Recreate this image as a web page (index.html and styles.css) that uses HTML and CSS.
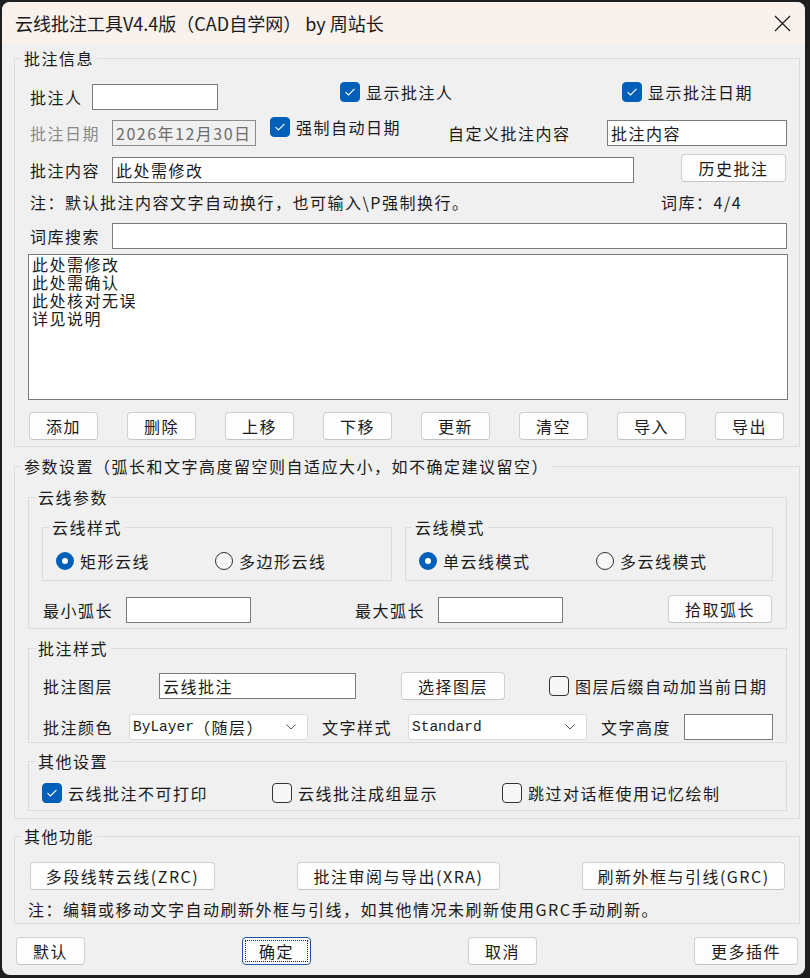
FILE: index.html
```html
<!DOCTYPE html>
<html lang="zh-CN">

<head>
    <meta charset="UTF-8">
    <meta name="viewport" content="width=device-width, initial-scale=1.0">
    <title>云线批注工具</title>
    <link rel="stylesheet" href="styles.css">
</head>

<body>
    <div class="window">
        <div class="titleBar">
            <span class="title">云线批注工具V4.4版（CAD自学网） by 周站长</span>
            <svg class="closeIcon" width="17" height="17" viewBox="0 0 17 17">
                <path d="M1 1L16 16M16 1L1 16" stroke="#1a1a1a" stroke-width="1.2" fill="none" />
            </svg>
        </div>

        <div class="content">
            <!-- 批注信息 -->
            <fieldset class="group" id="infoGroup">
                <legend>批注信息</legend>
                <div class="row" id="rowAuthor">
                    <span class="label" id="lblAuthor">批注人</span>
                    <div class="input" id="authorInput"></div>
                    <label class="check raised" id="chkShowAuthor">
                        <span class="box on"><svg width="12" height="10" viewBox="0 0 12 10"><path d="M1.5 5.2L4.5 8L10.5 1.8" stroke="#fff" stroke-width="1.1" fill="none" /></svg></span>显示批注人
                    </label>
                    <label class="check raised">
                        <span class="box on"><svg width="12" height="10" viewBox="0 0 12 10"><path d="M1.5 5.2L4.5 8L10.5 1.8" stroke="#fff" stroke-width="1.1" fill="none" /></svg></span>显示批注日期
                    </label>
                </div>
                <div class="row" id="rowDate">
                    <span class="label lbl82 disabled">批注日期</span>
                    <div class="input disabled" id="dateInput">2026年12月30日</div>
                    <label class="check raised" id="chkForceDate">
                        <span class="box on"><svg width="12" height="10" viewBox="0 0 12 10"><path d="M1.5 5.2L4.5 8L10.5 1.8" stroke="#fff" stroke-width="1.1" fill="none" /></svg></span>强制自动日期
                    </label>
                    <span class="label" id="lblCustom">自定义批注内容</span>
                    <div class="input" id="customInput">批注内容</div>
                </div>
                <div class="row" id="rowContent">
                    <span class="label lbl82">批注内容</span>
                    <div class="input" id="contentInput">此处需修改</div>
                    <button class="btn" id="historyBtn">历史批注</button>
                </div>
                <div class="row noteRow" id="rowNote">
                    <span id="noteText">注：默认批注内容文字自动换行，也可输入\P强制换行。</span>
                    <span>词库：4/4</span>
                </div>
                <div class="row" id="rowSearch">
                    <span class="label lbl82">词库搜索</span>
                    <div class="input grow"></div>
                </div>
                <div class="list">
                    <div>此处需修改</div>
                    <div>此处需确认</div>
                    <div>此处核对无误</div>
                    <div>详见说明</div>
                </div>
                <div class="btnRow">
                    <button class="btn small">添加</button>
                    <button class="btn small">删除</button>
                    <button class="btn small">上移</button>
                    <button class="btn small">下移</button>
                    <button class="btn small">更新</button>
                    <button class="btn small">清空</button>
                    <button class="btn small">导入</button>
                    <button class="btn small">导出</button>
                </div>
            </fieldset>

            <!-- 参数设置 -->
            <fieldset class="group" id="paramGroup">
                <legend>参数设置（弧长和文字高度留空则自适应大小，如不确定建议留空）</legend>

                <fieldset class="sub" id="cloudParams">
                    <legend>云线参数</legend>
                    <div class="pair">
                        <fieldset class="mini" id="styleBox">
                            <legend>云线样式</legend>
                            <div class="radioRow">
                                <label class="radio" id="radioRect"><span class="dot on"></span>矩形云线</label>
                                <label class="radio"><span class="dot"></span>多边形云线</label>
                            </div>
                        </fieldset>
                        <fieldset class="mini" id="modeBox">
                            <legend>云线模式</legend>
                            <div class="radioRow">
                                <label class="radio" id="radioSingle"><span class="dot on"></span>单云线模式</label>
                                <label class="radio"><span class="dot"></span>多云线模式</label>
                            </div>
                        </fieldset>
                    </div>
                    <div class="row" id="rowArc">
                        <span class="label lbl83">最小弧长</span>
                        <div class="input arcInput"></div>
                        <span class="label lbl83" id="lblMaxArc">最大弧长</span>
                        <div class="input arcInput"></div>
                        <button class="btn" id="pickArcBtn">拾取弧长</button>
                    </div>
                </fieldset>

                <fieldset class="sub" id="noteStyle">
                    <legend>批注样式</legend>
                    <div class="row" id="rowLayer">
                        <span class="label" id="lblLayer">批注图层</span>
                        <div class="input" id="layerInput">云线批注</div>
                        <button class="btn" id="pickLayerBtn">选择图层</button>
                        <label class="check" id="chkLayerDate">
                            <span class="box"></span>图层后缀自动加当前日期
                        </label>
                    </div>
                    <div class="row" id="rowColor">
                        <span class="label lbl86">批注颜色</span>
                        <div class="select"><span class="mono">ByLayer</span>（随层）
                            <svg class="chevron" width="10" height="6" viewBox="0 0 10 6"><path d="M0.5 0.5L5 5L9.5 0.5" stroke="#555" stroke-width="1" fill="none" /></svg>
                        </div>
                        <span class="label lbl86 gapLeft">文字样式</span>
                        <div class="select"><span class="mono">Standard</span>
                            <svg class="chevron" width="10" height="6" viewBox="0 0 10 6"><path d="M0.5 0.5L5 5L9.5 0.5" stroke="#555" stroke-width="1" fill="none" /></svg>
                        </div>
                        <span class="label lbl83 gapLeft">文字高度</span>
                        <div class="input" id="heightInput"></div>
                    </div>
                </fieldset>

                <fieldset class="sub" id="otherSettings">
                    <legend>其他设置</legend>
                    <div class="row checkRow">
                        <label class="check w230">
                            <span class="box on"><svg width="12" height="10" viewBox="0 0 12 10"><path d="M1.5 5.2L4.5 8L10.5 1.8" stroke="#fff" stroke-width="1.1" fill="none" /></svg></span>云线批注不可打印
                        </label>
                        <label class="check w230"><span class="box"></span>云线批注成组显示</label>
                        <label class="check"><span class="box"></span>跳过对话框使用记忆绘制</label>
                    </div>
                </fieldset>
            </fieldset>

            <!-- 其他功能 -->
            <fieldset class="group" id="funcGroup">
                <legend>其他功能</legend>
                <div class="row funcRow">
                    <button class="btn" id="zrcBtn">多段线转云线(ZRC)</button>
                    <button class="btn wide">批注审阅与导出(XRA)</button>
                    <button class="btn wide">刷新外框与引线(GRC)</button>
                </div>
                <div class="row noteRow" id="rowRefresh">注：编辑或移动文字自动刷新外框与引线，如其他情况未刷新使用GRC手动刷新。</div>
            </fieldset>

            <div class="footer">
                <button class="btn small">默认</button>
                <button class="btn small focused">确定</button>
                <button class="btn small">取消</button>
                <button class="btn" id="moreBtn">更多插件</button>
            </div>
        </div>
    </div>
</body>

</html>
```

FILE: styles.css
```css
* {
    box-sizing: border-box;
}

body {
    margin: 0;
    background-color: #1f1f1f;
    font-family: "Noto Sans CJK SC", sans-serif;
    font-size: 16px;
    line-height: 20px;
    letter-spacing: 1.5px;
    color: #1a1a1a;
}

.window {
    width: 803px;
    height: 973px;
    margin: 2px 0 0 2px;
    background-color: #f0f0f0;
    border-radius: 8px;
    overflow: hidden;
}

.titleBar {
    height: 42px;
    display: flex;
    align-items: center;
    padding: 0 14px 0 13px;
    background-color: #f8f1ec;
}

.title {
    font-size: 18px;
    letter-spacing: 0;
}

.closeIcon {
    margin-left: auto;
}

.content {
    padding: 0 5px 0 12px;
}

fieldset {
    margin: 0;
    min-width: 0;
    border: 1px solid #dcdcdc;
}

legend {
    padding: 0 3px;
    margin-left: -7px;
    line-height: 20px;
}

/* groups */

.group {
    padding: 16px 11px 6px 13px;
}

#infoGroup {
    margin-top: 4px;
}

#paramGroup {
    margin-top: 9px;
    padding: 11px 11px 7px 13px;
}

#funcGroup {
    margin-top: 7px;
    padding: 16px 11px 4px 13px;
}

.sub {
    margin-right: 1px;
    padding: 10px 13px 4px 13px;
}

#noteStyle {
    margin-top: 9px;
    padding: 14px 13px 2px 13px;
}

#otherSettings {
    margin-top: 8px;
    padding: 12px 13px 7px 13px;
}

.pair {
    display: flex;
    gap: 13px;
}

.mini {
    padding: 14px 13px 9px 13px;
}

#styleBox {
    width: 350px;
}

#modeBox {
    flex: 1;
}

/* rows */

.row {
    display: flex;
    align-items: center;
    height: 26px;
}

.label {
    flex: none;
    margin-left: 2px;
}

.label.disabled {
    color: #8a8a8a;
}

#lblAuthor {
    width: 62px;
}

.lbl82 {
    width: 82px;
}

.lbl83 {
    width: 83px;
}

.lbl86 {
    width: 86px;
}

#rowDate {
    margin-top: 10px;
}

#rowContent {
    margin-top: 11px;
}

#rowNote {
    margin-top: 9px;
    height: 20px;
}

#rowSearch {
    margin-top: 11px;
}

.noteRow {
    padding-left: 2px;
}

#noteText {
    width: 631px;
}

.input {
    flex: none;
    height: 26px;
    display: flex;
    align-items: center;
    padding-left: 3px;
    background-color: #fff;
    border: 1px solid #7a7a7a;
    white-space: nowrap;
}

.input.disabled {
    background-color: #f0f0f0;
    border-color: #8c8c8c;
    color: #6d6d6d;
}

.input.grow {
    flex: 1;
    margin-right: 1px;
}

#authorInput {
    width: 126px;
}

#dateInput {
    width: 144px;
}

#customInput {
    width: 180px;
}

#contentInput {
    width: 522px;
}

#lblCustom {
    width: 159px;
    margin-left: 0;
}

.check {
    flex: none;
    display: flex;
    align-items: center;
}

.check.raised {
    align-self: flex-start;
    margin-top: -2px;
}

#rowDate .check.raised {
    margin-top: -3px;
}

.box {
    flex: none;
    width: 20px;
    height: 20px;
    margin-right: 6px;
    display: flex;
    align-items: center;
    justify-content: center;
    border: 1px solid #333;
    border-radius: 4px;
    background-color: #f7f7f7;
}

.box.on {
    background-color: #005fb8;
    border-color: #005fb8;
}

#chkShowAuthor {
    margin-left: 122px;
    width: 282px;
}

#chkForceDate {
    margin-left: 14px;
    width: 178px;
}

.btn {
    flex: none;
    height: 28px;
    display: flex;
    align-items: center;
    justify-content: center;
    padding: 0;
    font-family: inherit;
    font-size: 16px;
    letter-spacing: 1.5px;
    color: #1a1a1a;
    background-color: #fdfdfd;
    border: 1px solid #d0d0d0;
    border-bottom-color: #c4c4c4;
    border-radius: 4px;
}

.btn.small {
    width: 69px;
}

#historyBtn {
    width: 105px;
    margin-left: 47px;
    align-self: flex-start;
    margin-top: -3px;
}

.list {
    margin-top: 5px;
    height: 146px;
    padding: 0 3px;
    line-height: 18px;
    background-color: #fff;
    border: 1px solid #7a7a7a;
}

.btnRow {
    display: flex;
    justify-content: space-between;
    margin-top: 12px;
    padding: 0 4px 0 1px;
}

/* radios */

.radioRow {
    display: flex;
    align-items: center;
    height: 20px;
}

.radio {
    display: flex;
    align-items: center;
}

.dot {
    flex: none;
    width: 18px;
    height: 18px;
    margin-right: 6px;
    border: 1px solid #333;
    border-radius: 50%;
    background-color: #f7f7f7;
}

.dot.on {
    border: 6px solid #005fb8;
    background-color: #fff;
}

#radioRect {
    width: 159px;
}

#radioSingle {
    width: 177px;
}

/* arc row */

#rowArc {
    margin-top: 15px;
    height: 28px;
}

#rowArc .label {
    margin-left: 1px;
}

.arcInput {
    width: 125px;
}

#lblMaxArc {
    margin-left: 104px !important;
}

#pickArcBtn {
    width: 104px;
    margin-left: auto;
    margin-right: 1px;
    margin-bottom: 2px;
}

/* note style */

#rowLayer {
    height: 28px;
}

#rowLayer .label,
#rowColor .label {
    margin-left: 1px;
}

#lblLayer {
    width: 116px;
}

#layerInput {
    width: 197px;
}

#pickLayerBtn {
    width: 104px;
    margin-left: 45px;
}

#chkLayerDate {
    margin-left: 44px;
}

#rowColor {
    margin-top: 14px;
}

#rowColor .gapLeft {
    margin-left: 14px;
}

.select {
    flex: none;
    width: 179px;
    height: 26px;
    display: flex;
    align-items: center;
    padding-left: 3px;
    background-color: #fff;
    border: 1px solid #dadada;
    border-radius: 3px;
    white-space: nowrap;
}

.mono {
    font-family: "Liberation Mono", monospace;
    font-size: 14.5px;
    letter-spacing: 0;
}

.chevron {
    margin-left: auto;
    margin-right: 11px;
}

#heightInput {
    width: 89px;
}

/* other settings */

.checkRow {
    height: 20px;
}

.w230 {
    width: 230px;
}

/* functions */

.funcRow {
    height: 28px;
    padding-left: 2px;
}

#zrcBtn {
    width: 185px;
}

.btn.wide {
    width: 203px;
    margin-left: 82px;
}

#rowRefresh {
    margin-top: 9px;
    height: 20px;
    padding-left: 0;
}

.footer {
    display: flex;
    justify-content: space-between;
    margin-top: 13px;
    padding: 0 2px 0 2px;
}

#moreBtn {
    width: 104px;
}

.btn.focused {
    border-color: #1d56a5;
    outline: 1px dotted #222;
    outline-offset: -4px;
}
```
